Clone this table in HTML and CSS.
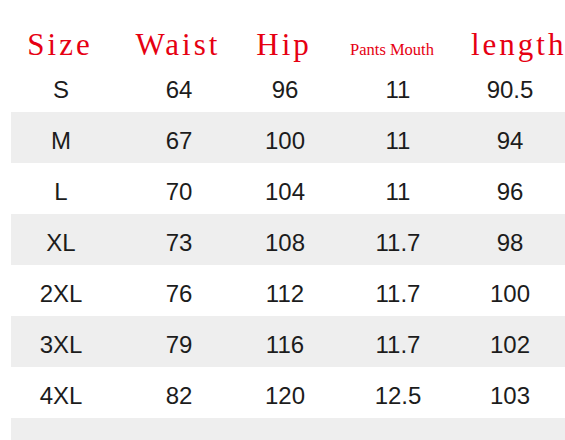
FILE: index.html
```html
<!DOCTYPE html>
<html>
<head>
<meta charset="utf-8">
<link rel="stylesheet" href="styles.css">
</head>
<body>
<div class="table">
  <div class="head">
    <div class="h">Size</div>
    <div class="h">Waist</div>
    <div class="h">Hip</div>
    <div class="h small">Pants Mouth</div>
    <div class="h len">length</div>
  </div>
  <div class="row"><div>S</div><div>64</div><div>96</div><div>11</div><div>90.5</div></div>
  <div class="row alt"><div>M</div><div>67</div><div>100</div><div>11</div><div>94</div></div>
  <div class="row"><div>L</div><div>70</div><div>104</div><div>11</div><div>96</div></div>
  <div class="row alt"><div>XL</div><div>73</div><div>108</div><div>11.7</div><div>98</div></div>
  <div class="row"><div>2XL</div><div>76</div><div>112</div><div>11.7</div><div>100</div></div>
  <div class="row alt"><div>3XL</div><div>79</div><div>116</div><div>11.7</div><div>102</div></div>
  <div class="row"><div>4XL</div><div>82</div><div>120</div><div>12.5</div><div>103</div></div>
  <div class="row alt last"></div>
</div>
</body>
</html>
```
FILE: styles.css
```css
html, body {
  margin: 0;
  padding: 0;
  background: #ffffff;
  width: 565px;
  height: 440px;
  overflow: hidden;
}
.table {
  padding-left: 11px;
}
.head, .row {
  display: grid;
  grid-template-columns: 100px 136px 76px 150px 74px 1fr;
}
.head {
  box-sizing: border-box;
  height: 61px;
  padding-top: 28px;
  align-items: baseline;
}
.h {
  text-align: center;
  font-family: "Liberation Serif", serif;
  font-size: 31px;
  line-height: 33px;
  letter-spacing: 3px;
  color: #e60012;
  margin-left: -2px;
}
.h.small {
  font-size: 16.5px;
  line-height: 20px;
  letter-spacing: 0;
  padding-right: 12px;
  margin-left: 0;
}
.h.len {
  padding-right: 6px;
}
.row {
  height: 51px;
  align-items: center;
  font-family: "Liberation Sans", Arial, sans-serif;
  font-size: 24px;
  color: #1c1c1c;
}
.row > div {
  text-align: center;
  padding-top: 7px;
}
.row.alt {
  background: #eeeeee;
}
.row.last {
  height: 22px;
}
```
